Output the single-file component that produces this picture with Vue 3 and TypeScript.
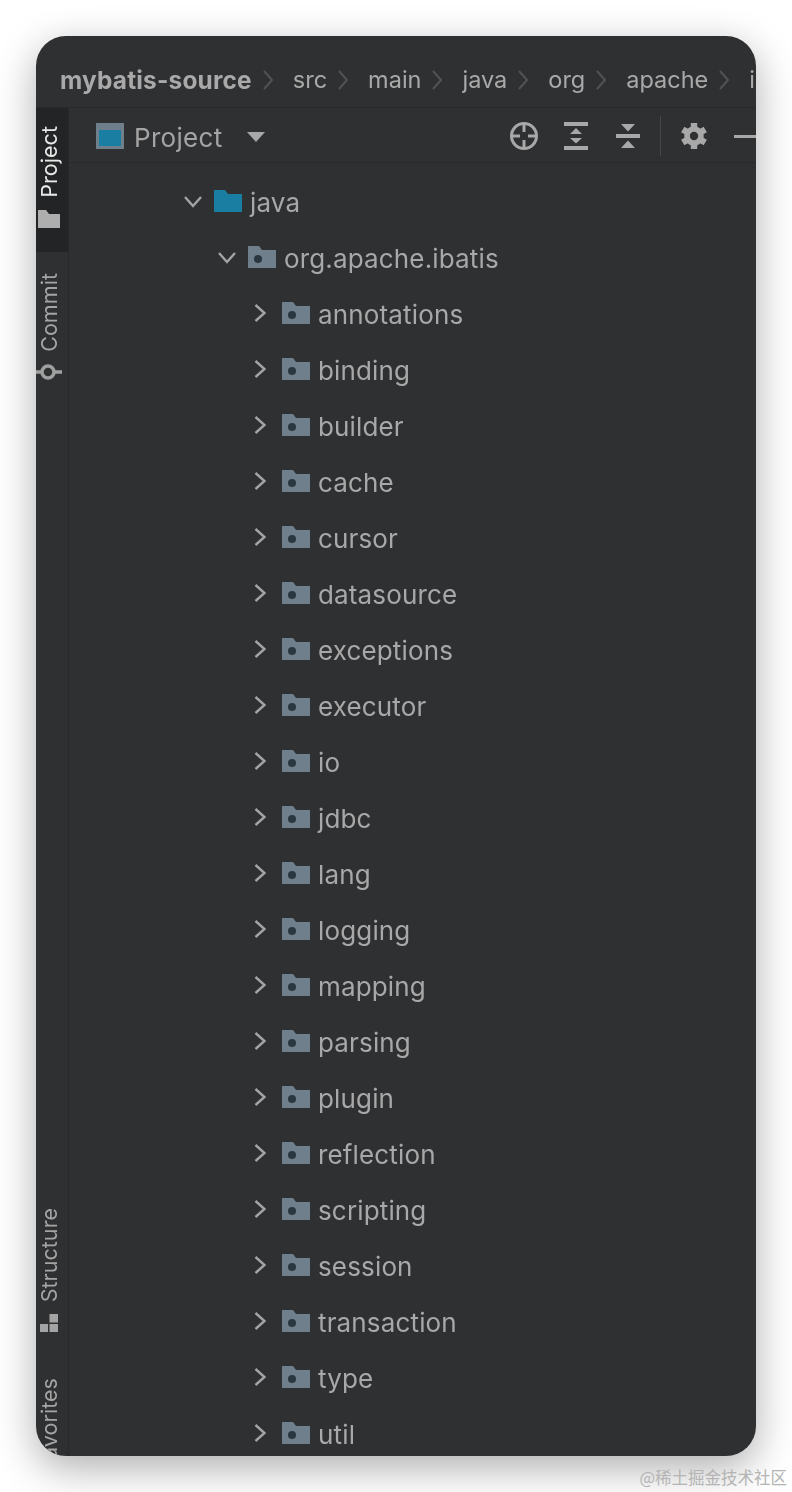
<script setup lang="ts">
const crumbs: string[] = ['src', 'main', 'java', 'org', 'apache', 'ibatis']
const packages: string[] = [
  'annotations', 'binding', 'builder', 'cache', 'cursor', 'datasource', 'exceptions',
  'executor', 'io', 'jdbc', 'lang', 'logging', 'mapping', 'parsing', 'plugin',
  'reflection', 'scripting', 'session', 'transaction', 'type', 'util',
]
const teeth: number[] = [0, 60, 120, 180, 240, 300]
</script>

<template>
  <div class="page">
    <div class="window">
      <header class="crumbs">
        <span class="crumb strong">mybatis-source</span>
        <template v-for="c in crumbs" :key="c">
          <svg class="sep" width="10" height="20" viewBox="0 0 10 20"><path d="M1 1l8 9-8 9" /></svg>
          <span class="crumb">{{ c }}</span>
        </template>
      </header>
      <div class="body">
        <aside class="rail">
          <div class="tab active">
            <span class="vtext">Project</span>
            <svg width="22" height="18" viewBox="0 0 22 18" class="rail-icon"><path d="M0 0h8l3 4h11v14H0z" fill="#aeaeae" /></svg>
          </div>
          <div class="tab commit">
            <span class="vtext">Commit</span>
            <svg width="26" height="16" viewBox="0 0 26 16" class="commit-icon"><circle cx="12" cy="8" r="6" fill="none" stroke="#a0a0a0" stroke-width="3.400" /><path d="M0 8h6M18 8h8" stroke="#a0a0a0" stroke-width="3.400" /></svg>
          </div>
          <div class="spring"></div>
          <div class="tab structure">
            <span class="vtext">Structure</span>
            <svg width="18" height="18" viewBox="0 0 18 18" class="rail-icon struct-icon"><path d="M9.500 0H18v8.500H9.500zM0 10h8v8H0zM9.500 10H18v8H9.500z" fill="#a4a4a4" /></svg>
          </div>
          <div class="tab favorites">
            <span class="vtext">Favorites</span>
          </div>
        </aside>
        <main class="panel">
          <div class="toolbar">
            <svg class="project-icon" width="28" height="26" viewBox="0 0 28 26"><rect width="28" height="26" fill="#6f808c" /><rect x="3" y="7" width="22" height="16" fill="#197ea2" /></svg>
            <span class="title">Project</span>
            <svg class="caret" width="18" height="10" viewBox="0 0 18 10"><path d="M0 0h18l-9 10z" fill="#a8a8a8" /></svg>
            <div class="tools">
              <svg class="tool" width="30" height="30" viewBox="0 0 30 30" fill="none" stroke="#a8a8a8" stroke-width="3">
                <circle cx="15" cy="15" r="12.500" /><path d="M15 3v8M15 19v8M3 15h8M19 15h8" />
              </svg>
              <svg class="tool expand" width="24" height="28" viewBox="0 0 24 28" fill="#a8a8a8">
                <path d="M0 0h24v4H0zM0 24h24v4H0zM12 6l6 6H6zM12 21.500l-6-5.500h12z" />
              </svg>
              <svg class="tool collapse" width="24" height="26" viewBox="0 0 24 26" fill="#a8a8a8">
                <path d="M0 11h24v4H0zM5 1h14l-7 7.500zM12 17.500l7 7.500H5z" />
              </svg>
              <i class="divider"></i>
              <svg class="tool gear" width="26" height="26" viewBox="-13 -13 26 26" fill="#a8a8a8">
                <circle r="7" fill="none" stroke="#a8a8a8" stroke-width="5.600" />
                <rect v-for="t in teeth" :key="t" x="-3.200" y="-13" width="6.400" height="5" :transform="`rotate(${t})`" />
              </svg>
              <i class="minus"></i>
            </div>
          </div>
          <div class="tree">
            <div class="row lvl0">
              <svg class="chev" width="18" height="12" viewBox="0 0 18 12"><path d="M1 1l8 9 8-9" /></svg>
              <svg class="folder" width="28" height="22" viewBox="0 0 28 22"><path d="M0 0h11l3 4h14v18H0z" fill="#197ea2" /></svg>
              <span class="name">java</span>
            </div>
            <div class="row lvl1">
              <svg class="chev" width="18" height="12" viewBox="0 0 18 12"><path d="M1 1l8 9 8-9" /></svg>
              <svg class="folder" width="28" height="22" viewBox="0 0 28 22"><path d="M0 0h11l3 4h14v18H0z" fill="#6f808c" /><circle cx="10" cy="13" r="4" fill="#2b3740" /></svg>
              <span class="name">org.apache.ibatis</span>
            </div>
            <div v-for="p in packages" :key="p" class="row lvl2">
              <svg class="chev right" width="12" height="18" viewBox="0 0 12 18"><path d="M1.500 1l9 8-9 8" /></svg>
              <svg class="folder" width="28" height="22" viewBox="0 0 28 22"><path d="M0 0h11l3 4h14v18H0z" fill="#6f808c" /><circle cx="10" cy="13" r="4" fill="#2b3740" /></svg>
              <span class="name">{{ p }}</span>
            </div>
          </div>
        </main>
      </div>
    </div>
    <span class="mark">@稀土掘金技术社区</span>
  </div>
</template>

<style>
html, body { margin: 0; background: #fff; }
</style>

<style scoped>
.page {
  position: relative;
  width: 792px;
  height: 1492px;
  padding: 36px;
  box-sizing: border-box;
  overflow: hidden;
  background: #fff;
  font-family: Inter, "Noto Sans", sans-serif;
}
.window {
  width: 720px;
  height: 1420px;
  border-radius: 30px;
  overflow: hidden;
  background: #2f3032;
  box-shadow: 0 12px 40px rgba(0, 0, 0, 0.32);
  display: flex;
  flex-direction: column;
  filter: blur(0.4px);
}
.crumbs {
  flex: none;
  height: 72px;
  display: flex;
  align-items: center;
  padding: 16px 0 0 24px;
  box-sizing: border-box;
  border-bottom: 1px solid #28292a;
  white-space: nowrap;
  font-size: 23.500px;
  color: #a9a9a9;
}
.strong { font-weight: 700; font-size: 24.400px; letter-spacing: 0.2px; }
.sep { flex: none; fill: none; stroke: #505254; stroke-width: 2; margin: 0 20px 0 11px; }
.body { flex: 1; min-height: 0; display: flex; }
.rail {
  flex: none;
  width: 33px;
  box-sizing: border-box;
  border-right: 1px solid #28292a;
  display: flex;
  flex-direction: column;
  overflow: hidden;
}
.tab {
  display: flex;
  flex-direction: column;
  align-items: flex-start;
  color: #a4a4a4;
  font-size: 21.600px;
  flex: none;
  padding-left: 1px;
}
.active {
  height: 144px;
  background: #232425;
  color: #e8e8e8;
  padding-top: 18px;
  box-sizing: border-box;
  gap: 12px;
}
.commit { padding-top: 21px; gap: 12px; }
.commit-icon { flex: none; margin-left: -1px; }
.spring { flex: 1; }
.structure { gap: 12px; margin-bottom: 44px; }
.favorites { height: 78px; padding-top: 2px; }
.vtext {
  writing-mode: vertical-rl;
  transform: rotate(180deg);
  white-space: nowrap;
  line-height: 24px;
}
.rail-icon { flex: none; margin-left: 1px; }
.struct-icon { margin-left: 3px; }
.panel { flex: 1; min-width: 0; display: flex; flex-direction: column; overflow: hidden; }
.toolbar {
  flex: none;
  height: 55px;
  box-sizing: border-box;
  border-bottom: 1px solid #28292a;
  display: flex;
  align-items: center;
  padding: 2px 0 0 27px;
}
.project-icon { flex: none; }
.title { font-size: 26px; color: #a4a4a4; margin: 2px 0 0 10px; letter-spacing: 0.3px; }
.caret { flex: none; margin: 2px 0 0 25px; }
.tools { display: flex; align-items: center; margin-left: auto; }
.tool { flex: none; }
.expand { margin-left: 25px; }
.collapse { margin-left: 28px; }
.divider { width: 1px; height: 40px; background: #46474a; margin-left: 20px; }
.gear { margin-left: 20px; }
.minus { width: 22px; height: 3px; background: #a8a8a8; margin-left: 27px; }
.tree { flex: 1; padding-top: 11px; overflow: hidden; }
.row { height: 56px; display: flex; align-items: center; }
.lvl0 { padding-left: 115px; }
.lvl1 { padding-left: 149px; }
.lvl2 { padding-left: 185px; }
.chev { flex: none; fill: none; stroke: #a4a4a4; stroke-width: 2.400; }
.right { margin-top: -2px; }
.folder { flex: none; margin-left: 12px; margin-top: -2px; }
.right + .folder { margin-left: 16px; }
.name { font-size: 26px; color: #a8a8a8; margin-left: 8px; letter-spacing: 0.15px; white-space: nowrap; }
.mark {
  position: absolute;
  right: 5px;
  bottom: 3px;
  font-family: "Noto Sans CJK SC", "Liberation Serif", serif;
  font-size: 16.500px;
  color: #b4b4b4;
}
</style>
